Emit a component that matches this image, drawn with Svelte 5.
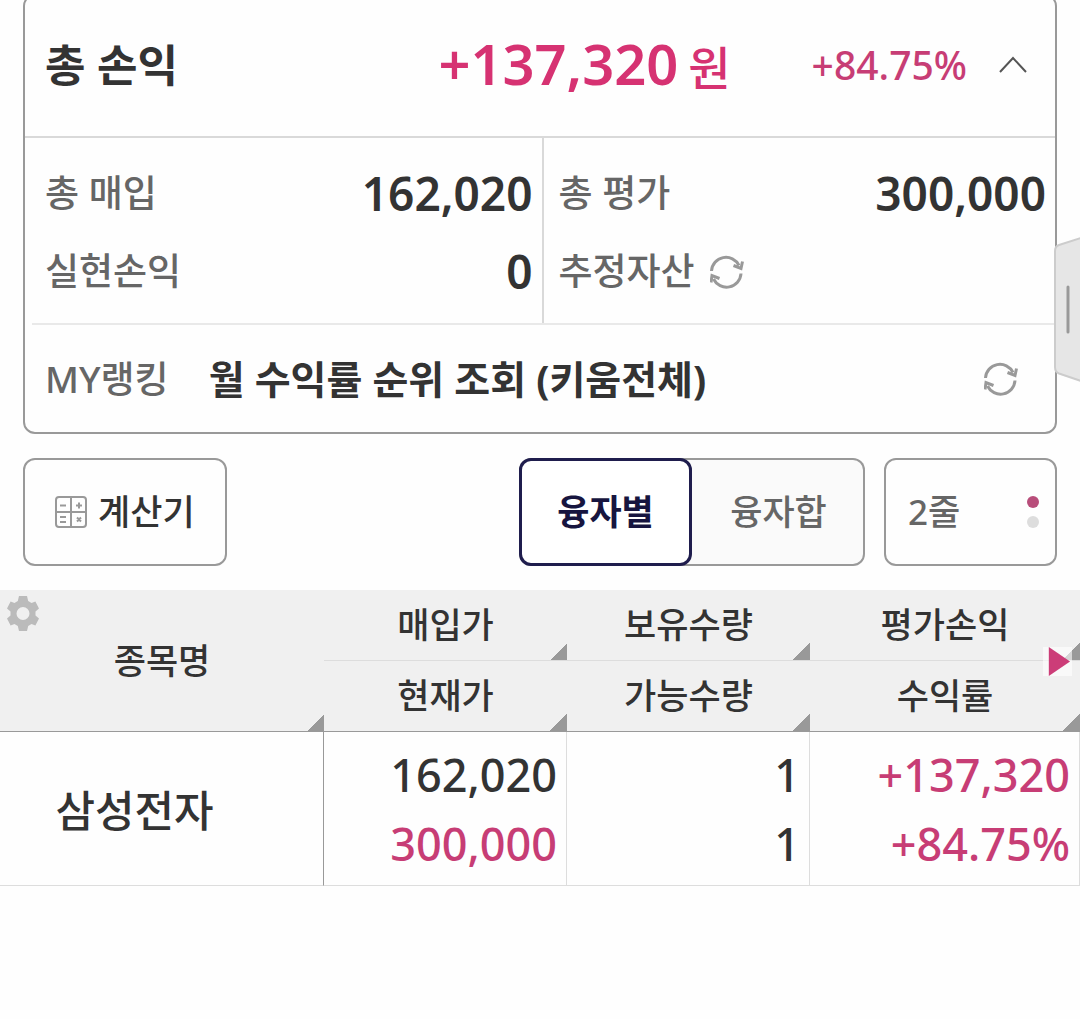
<script>
  let open = $state(true);
  let loanView = $state('each');
  let lines = $state(2);

  const holdings = [
    {
      name: '삼성전자',
      buyPrice: '162,020',
      price: '300,000',
      quantity: '1',
      available: '1',
      profit: '+137,320',
      rate: '+84.75%'
    }
  ];
</script>

{#snippet refreshIcon()}
  <svg class="refresh" viewBox="0 0 34 34" aria-hidden="true">
    <path d="M1.500 16A14.500 14.500 0 0 1 29 10.500" />
    <path d="M23.500 10.500l7.500 3 1.500-7" />
    <path d="M31 18.500A14.500 14.500 0 0 1 3.500 24" />
    <path d="M9.500 23.500l-7.500-3-1 7" />
  </svg>
{/snippet}

<main>
  <section class="card">
    <header class="total">
      <h1>총 손익</h1>
      <p class="amount">+137,320<span>원</span></p>
      <p class="percent">+84.75%</p>
      <button type="button" aria-label="접기" aria-expanded={open} onclick={() => (open = !open)}>
        <svg class="chevron" class:down={!open} viewBox="0 0 30 18" aria-hidden="true">
          <path d="M2 16L15 2l13 14" />
        </svg>
      </button>
    </header>

    {#if open}
      <div class="details">
        <dl>
          <div><dt>총 매입</dt><dd>162,020</dd></div>
          <div><dt>실현손익</dt><dd>0</dd></div>
        </dl>
        <dl>
          <div><dt>총 평가</dt><dd>300,000</dd></div>
          <div>
            <dt>추정자산</dt>
            <dd class="reload"><button type="button" aria-label="추정자산 새로고침">{@render refreshIcon()}</button></dd>
          </div>
        </dl>
      </div>

      <div class="ranking">
        <span>MY랭킹</span>
        <a href="#ranking">월 수익률 순위 조회 (키움전체)</a>
        <button type="button" aria-label="랭킹 새로고침">{@render refreshIcon()}</button>
      </div>
    {/if}
  </section>

  <!-- Side drawer handle -->
  <button type="button" class="drawer" aria-label="메뉴 열기">
    <svg viewBox="0 0 26 145" aria-hidden="true">
      <path class="tab" d="M27 1L5 8Q1 9.500 1 14V130Q1 135 5 136.500L27 144" />
      <path class="grip" d="M14 50V95" />
    </svg>
  </button>

  <div class="tools">
    <button type="button" class="tool calc">
      <svg viewBox="0 0 32 32" aria-hidden="true">
        <rect x="1" y="1" width="30" height="30" rx="3" />
        <path d="M16 1v30M1 16h30M5 9.500h6M21 9.500h6M24 6.500v6M5 21h6M5 26h6M22 21.500l4 4M26 21.500l-4 4" />
      </svg>
      계산기
    </button>

    <div class="segment">
      <button type="button" class:active={loanView === 'each'} onclick={() => (loanView = 'each')}>융자별</button>
      <button type="button" class:active={loanView === 'sum'} onclick={() => (loanView = 'sum')}>융자합</button>
    </div>

    <button type="button" class="tool lines" onclick={() => (lines = lines === 2 ? 1 : 2)}>
      {lines}줄
      <span class="dots">
        <i class:on={lines === 2}></i>
        <i class:on={lines === 1}></i>
      </span>
    </button>
  </div>

  <div class="holdings">
    <table>
      <thead>
        <tr>
          <th rowspan="2" class="name">종목명</th>
          <th>매입가</th>
          <th>보유수량</th>
          <th>평가손익</th>
        </tr>
        <tr>
          <th>현재가</th>
          <th>가능수량</th>
          <th>수익률</th>
        </tr>
      </thead>
      {#each holdings as item}
        <tbody>
          <tr>
            <th rowspan="2" scope="rowgroup">{item.name}</th>
            <td>{item.buyPrice}</td>
            <td>{item.quantity}</td>
            <td class="up">{item.profit}</td>
          </tr>
          <tr>
            <td class="up">{item.price}</td>
            <td>{item.available}</td>
            <td class="up">{item.rate}</td>
          </tr>
        </tbody>
      {/each}
    </table>

    <button type="button" class="settings" aria-label="설정">
      <svg viewBox="0 0 32 35" aria-hidden="true">
        <path fill-rule="evenodd" d="M12 0h8l1.200 5 3.300 2 3.900-1.500L32 12.500l-3.500 3v4l3.500 3-3.600 7L24.500 28l-3.300 2L20 35h-8l-1.200-5-3.300-2-3.900 1.500L0 22.500l3.500-3v-4L0 12.500l3.600-7L7.500 7l3.300-2zM16 11a6.500 6.500 0 1 0 0 13a6.500 6.500 0 1 0 0-13z" />
      </svg>
    </button>
    <button type="button" class="next" aria-label="다음 항목">
      <svg viewBox="0 0 30 30" aria-hidden="true"><path d="M6 0l22 15L6 30z" /></svg>
    </button>
  </div>
</main>

<style>
  :global(body) {
    margin: 0;
    background: #fefefe;
  }

  main {
    position: relative;
    overflow: hidden;
    color: #333;
    font-family: 'Noto Sans', 'Noto Sans CJK KR', sans-serif;
    font-size: 37px;
  }

  h1, p, dl, dd {
    margin: 0;
  }

  button {
    padding: 0;
    border: none;
    background: none;
    color: inherit;
    font: inherit;
    cursor: pointer;
  }

  svg {
    display: block;
  }

  /* Summary card */
  .card {
    margin: -6px 23px 24px;
    border: 2px solid #999;
    border-radius: 12px;
  }

  .total {
    display: flex;
    align-items: center;
    padding: 35px 27px 37px 20px;
    border-bottom: 2px solid #d9d9d9;
    line-height: 64px;
  }

  h1 {
    flex: 1;
    font-size: 44px;
    font-weight: 700;
  }

  .amount {
    color: #d63272;
    font-size: 56px;
    font-weight: 600;
  }

  .amount span {
    margin-left: 10px;
    font-size: 46px;
    font-weight: 500;
  }

  .percent {
    margin: 0 31px 0 81px;
    color: #c73d75;
    font-size: 39px;
    font-weight: 500;
  }

  .chevron {
    width: 30px;
    height: 18px;
    fill: none;
    stroke: #555;
    stroke-width: 2;
  }

  .chevron.down {
    transform: rotate(180deg);
  }

  .details {
    display: flex;
  }

  dl {
    flex: 1;
    padding: 16px 9px 13px 20px;
  }

  dl + dl {
    padding-left: 15px;
    border-left: 2px solid #d9d9d9;
  }

  dl div {
    display: flex;
    align-items: center;
    line-height: 78px;
  }

  dt {
    color: #666;
    font-weight: 500;
  }

  dd {
    margin-left: auto;
    font-size: 46px;
    font-weight: 600;
  }

  .reload {
    margin-left: 15px;
  }

  .refresh {
    width: 34px;
    height: 34px;
    fill: none;
    stroke: #999;
    stroke-width: 3;
  }

  .ranking {
    display: flex;
    align-items: center;
    margin-left: 7px;
    padding: 0 37px 0 13px;
    border-top: 2px solid #e9e9e9;
    line-height: 107px;
  }

  .ranking span {
    margin-right: 40px;
    color: #666;
    font-weight: 500;
  }

  .ranking a {
    flex: 1;
    color: inherit;
    font-size: 39px;
    font-weight: 700;
    text-decoration: none;
  }

  .drawer {
    position: absolute;
    top: 237px;
    right: 0;
  }

  .drawer svg {
    width: 26px;
    height: 145px;
  }

  .tab {
    fill: #e6e6e6;
    stroke: #ccc;
    stroke-width: 2;
  }

  .grip {
    stroke: #999;
    stroke-width: 3;
    stroke-linecap: round;
  }

  /* Buttons above the table */
  .tools {
    display: flex;
    gap: 19px;
    margin: 0 23px 24px;
    font-size: 35px;
    font-weight: 500;
    line-height: 104px;
  }

  .tool {
    display: flex;
    align-items: center;
    border: 2px solid #999;
    border-radius: 12px;
  }

  .calc {
    gap: 11px;
    margin-right: auto;
    padding: 0 30px;
  }

  .calc svg {
    width: 32px;
    height: 32px;
    fill: none;
    stroke: #999;
    stroke-width: 2;
  }

  .segment {
    display: flex;
    border-radius: 12px;
    background: #fafafa;
    box-shadow: inset 0 0 0 2px #999;
    color: #666;
  }

  .segment button {
    box-sizing: border-box;
    width: 173px;
    border: 2px solid transparent;
    border-radius: 12px;
  }

  .segment .active {
    border: 3px solid #1f1d4d;
    background: #fff;
    color: #17153f;
    font-weight: 700;
    line-height: 102px;
  }

  .lines {
    box-sizing: border-box;
    justify-content: space-between;
    width: 173px;
    padding: 0 16px 0 22px;
    color: #666;
  }

  .dots {
    display: grid;
    gap: 8px;
  }

  .dots i {
    width: 12px;
    height: 12px;
    border-radius: 50%;
    background: #ddd;
  }

  .dots .on {
    background: #b84d7a;
  }

  /* Holdings table */
  .holdings {
    position: relative;
  }

  table {
    width: 100%;
    border-spacing: 0;
    table-layout: fixed;
  }

  th, td {
    padding: 0;
  }

  thead th {
    border-bottom: 1px solid #ddd;
    background: linear-gradient(135deg, transparent 50%, #999 50%) right bottom / 17px 17px no-repeat #f0f0f0;
    font-size: 35px;
    font-weight: 500;
    line-height: 70px;
  }

  thead th:nth-child(2),
  thead th:nth-child(3) {
    width: 22.5%;
  }

  thead .name {
    width: 30%;
  }

  thead .name,
  thead tr:last-child th {
    border-bottom-color: #999;
  }

  thead th:nth-child(4) {
    width: 25%;
  }

  tbody th {
    padding-right: 54px;
    border-right: 1px solid #999;
    border-bottom: 1px solid #ddd;
    font-size: 43px;
    font-weight: 500;
  }

  td {
    padding: 8px 9px 0 0;
    border-right: 1px solid #ddd;
    font-size: 45px;
    font-weight: 500;
    line-height: 69px;
    text-align: right;
  }

  tbody tr:last-child td {
    padding: 0 9px 7px 0;
    border-bottom: 1px solid #ddd;
  }

  .up {
    color: #c73d75;
  }

  .settings {
    position: absolute;
    top: 6px;
    left: 7px;
  }

  .settings svg {
    width: 32px;
    height: 35px;
    fill: #bbb;
  }

  .next {
    position: absolute;
    top: 57px;
    right: 8px;
    background: rgb(255 255 255 / 60%);
  }

  .next svg {
    width: 29px;
    height: 29px;
    fill: #cc3d78;
  }
</style>
